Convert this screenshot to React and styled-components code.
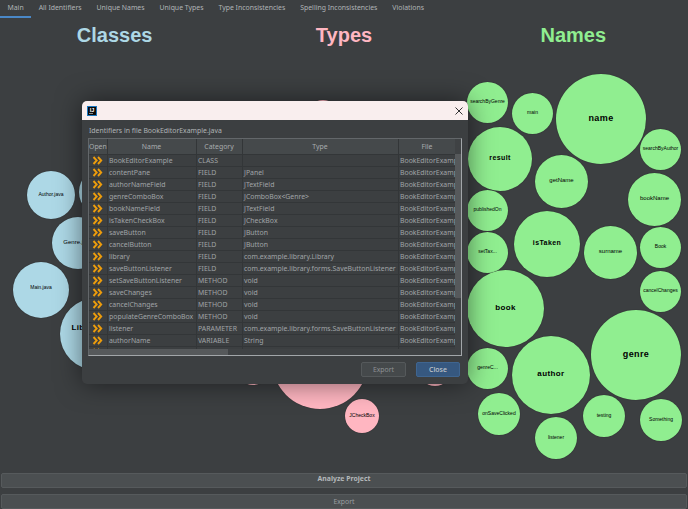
import React from "react";
import styled, { createGlobalStyle } from "styled-components";

const GlobalStyle = createGlobalStyle`
  html, body {
    margin: 0;
    padding: 0;
    background: #3c3f41;
    overflow: hidden;
  }
  * {
    box-sizing: border-box;
  }
`;

const TOP = 18;
const SMALL_TEXT = "6.9px";

const tabs = [
  "Main",
  "All Identifiers",
  "Unique Names",
  "Unique Types",
  "Type Inconsistencies",
  "Spelling Inconsistencies",
  "Violations",
];

// x, y, d in page pixels
const classBubbles = [
  { x: 79, y: 168, d: 48, label: "" },
  { x: 27, y: 171, d: 48, label: "Author.java" },
  { x: 52, y: 217, d: 52, label: "Genre.java", size: 6 },
  { x: 13, y: 262, d: 56, label: "Main.java", lift: 6 },
  { x: 60, y: 298, d: 72, label: "Library.java", size: 8, bold: true, lift: 14 },
];

const typeBubbles = [
  { x: 308, y: 100, d: 30, label: "" },
  { x: 272, y: 313, d: 96, label: "" },
  { x: 236, y: 351, d: 34, label: "" },
  { x: 418, y: 352, d: 34, label: "" },
  { x: 345, y: 399, d: 34, label: "JCheckBox" },
];

const nameBubbles = [
  { x: 467, y: 82, d: 41, label: "searchByGenre" },
  { x: 512, y: 93, d: 41, label: "main" },
  { x: 556, y: 74, d: 90, label: "name", size: 9, bold: true },
  { x: 468, y: 127, d: 64, label: "result", size: 7, bold: true },
  { x: 535, y: 155, d: 53, label: "getName", size: 6 },
  { x: 640, y: 129, d: 41, label: "searchByAuthor" },
  { x: 628, y: 173, d: 53, label: "bookName", size: 6 },
  { x: 467, y: 190, d: 41, label: "publishedOn" },
  { x: 467, y: 232, d: 41, label: "setTax..." },
  { x: 514, y: 211, d: 66, label: "isTaken", size: 7, bold: true },
  { x: 584, y: 226, d: 53, label: "surname", size: 6 },
  { x: 640, y: 227, d: 41, label: "Book" },
  { x: 640, y: 271, d: 41, label: "cancelChanges" },
  { x: 467, y: 270, d: 77, label: "book", size: 8, bold: true },
  { x: 591, y: 310, d: 90, label: "genre", size: 9, bold: true },
  { x: 467, y: 348, d: 41, label: "genreC..." },
  { x: 512, y: 336, d: 78, label: "author", size: 8, bold: true },
  { x: 478, y: 393, d: 42, label: "onSaveClicked" },
  { x: 583, y: 395, d: 42, label: "testing" },
  { x: 640, y: 399, d: 42, label: "Something" },
  { x: 535, y: 417, d: 42, label: "listener" },
];

const F = "BookEditorExample.java";
const rows = [
  ["BookEditorExample", "CLASS", "", F],
  ["contentPane", "FIELD", "JPanel", F],
  ["authorNameField", "FIELD", "JTextField", F],
  ["genreComboBox", "FIELD", "JComboBox<Genre>", F],
  ["bookNameField", "FIELD", "JTextField", F],
  ["isTakenCheckBox", "FIELD", "JCheckBox", F],
  ["saveButton", "FIELD", "JButton", F],
  ["cancelButton", "FIELD", "JButton", F],
  ["library", "FIELD", "com.example.library.Library", F],
  ["saveButtonListener", "FIELD", "com.example.library.forms.SaveButtonListener", F],
  ["setSaveButtonListener", "METHOD", "void", F],
  ["saveChanges", "METHOD", "void", F],
  ["cancelChanges", "METHOD", "void", F],
  ["populateGenreComboBox", "METHOD", "void", F],
  ["listener", "PARAMETER", "com.example.library.forms.SaveButtonListener", F],
  ["authorName", "VARIABLE", "String", F],
  ["bookName", "VARIABLE", "String", F],
];

const Page = styled.div`
  width: 688px;
  height: 509px;
  display: flex;
  flex-direction: column;
  background: #3c3f41;
  font-family: "Noto Sans", sans-serif;
  overflow: hidden;
`;

const TabBar = styled.div`
  height: ${TOP}px;
  flex: none;
  display: flex;
`;

const Tab = styled.div`
  padding: 0 7.5px;
  font-size: ${SMALL_TEXT};
  line-height: 16px;
  color: #b0b4b6;
  border-bottom: 2px solid ${({ $active }) => ($active ? "#4a88c7" : "transparent")};
`;

const Content = styled.div`
  position: relative;
  flex: 1;
  min-height: 0;
`;

const Headings = styled.div`
  display: grid;
  grid-template-columns: repeat(3, 1fr);
  padding-top: 6px;
`;

const Heading = styled.div`
  text-align: center;
  font-family: "Liberation Sans", sans-serif;
  font-weight: 700;
  font-size: 20px;
  line-height: 22px;
  color: ${({ $color }) => $color};
`;

const Bubble = styled.div`
  position: absolute;
  left: ${({ $x }) => $x}px;
  top: ${({ $y }) => $y - TOP}px;
  width: ${({ $d }) => $d}px;
  height: ${({ $d }) => $d}px;
  padding-bottom: ${({ $lift }) => $lift}px;
  border-radius: 50%;
  background: ${({ $color }) => $color};
  box-shadow: 0 0 1px rgba(20, 20, 20, 0.8);
  display: flex;
  align-items: center;
  justify-content: center;
  font-family: "Liberation Sans", sans-serif;
  font-size: ${({ $size }) => $size}px;
  font-weight: ${({ $bold }) => ($bold ? 700 : 400)};
  letter-spacing: ${({ $bold }) => ($bold ? "0.4px" : "0")};
  color: #000;
  white-space: nowrap;
`;

const Dialog = styled.div`
  position: absolute;
  left: 82px;
  top: ${101 - TOP}px;
  width: 386px;
  height: 283px;
  background: #3c3f41;
  border-radius: 5px;
  box-shadow: 0 0 26px rgba(0, 0, 0, 0.5);
  display: flex;
  flex-direction: column;
  overflow: hidden;
`;

const TitleBar = styled.div`
  height: 19px;
  flex: none;
  background: #f9eeee;
  display: flex;
  align-items: center;
  justify-content: space-between;
  padding: 0 4px 0 5px;
`;

const AppLogo = styled.div`
  position: relative;
  width: 10px;
  height: 10px;
  background: #0a0a0a;
  outline: 1px solid #1c78c0;
  outline-offset: -1px;
  color: #fff;
  font-family: "Liberation Sans", sans-serif;
  font-weight: 700;
  font-size: 5.5px;
  line-height: 8px;
  text-align: center;
  &::after {
    content: "";
    position: absolute;
    left: 2px;
    bottom: 1.5px;
    width: 4px;
    height: 1px;
    background: #888;
  }
`;

const DialogBody = styled.div`
  flex: 1;
  min-height: 0;
  display: flex;
  flex-direction: column;
  padding: 0 6px;
`;

const DialogLabel = styled.div`
  height: 18px;
  flex: none;
  font-size: ${SMALL_TEXT};
  line-height: 21px;
  padding-left: 1px;
  color: #b0b4b6;
`;

const TableFrame = styled.div`
  position: relative;
  height: 218px;
  flex: none;
  border: 1px solid;
  border-color: #63676a #a2a6a9 #a2a6a9 #63676a;
  overflow: hidden;
`;

const Table = styled.table`
  border-collapse: collapse;
  table-layout: fixed;
  width: 367px;
  font-size: ${SMALL_TEXT};
  color: #a0a4a7;
  th, td {
    padding: 0 1.5px;
    overflow: hidden;
    white-space: nowrap;
    border-right: 1px solid #333638;
    border-bottom: 1px solid #333638;
  }
  th {
    height: 15px;
    font-weight: 400;
    text-align: center;
    color: #a8acae;
    background: #45494b;
  }
  td {
    height: 12px;
    line-height: 11px;
    background: #3c3f41;
  }
`;

const OpenCell = styled.td`
  text-align: center;
  && {
    padding: 0;
  }
`;

const ChevronIcon = () => (
  <svg width="11" height="9" viewBox="0 0 11 9" style={{ display: "block", margin: "0 auto" }}>
    <path d="M1.5 1l3.2 3.5L1.5 8M6 1l3.2 3.5L6 8" fill="none" stroke="#ec9c0c" strokeWidth="1.9" />
  </svg>
);

const ScrollCorner = styled.div`
  position: absolute;
  right: 0;
  top: 0;
  bottom: 0;
  width: 6px;
  background: #3f4244;
`;

const VThumb = styled.div`
  position: absolute;
  right: 0;
  top: 15px;
  width: 6px;
  height: 144px;
  background: #56595b;
`;

const HTrack = styled.div`
  position: absolute;
  left: 0;
  right: 0;
  bottom: 0;
  height: 6px;
  background: #3f4244;
`;

const HThumb = styled.div`
  position: absolute;
  left: 0;
  bottom: 0;
  width: 139px;
  height: 6px;
  background: #56595b;
`;

const DialogActions = styled.div`
  display: flex;
  justify-content: flex-end;
  gap: 10px;
  padding: 6px 2px 0 0;
`;

const DialogButton = styled.div`
  width: ${({ $primary }) => ($primary ? 44 : 45)}px;
  height: 15px;
  border-radius: 2px;
  font-size: ${SMALL_TEXT};
  line-height: 13px;
  text-align: center;
  color: ${({ $primary }) => ($primary ? "#c4c8cc" : "#8d9194")};
  font-weight: ${({ $primary }) => ($primary ? 500 : 400)};
  background: ${({ $primary }) => ($primary ? "#365880" : "#45494b")};
  border: 1px solid ${({ $primary }) => ($primary ? "#3f6590" : "#55595b")};
`;

const Footer = styled.div`
  flex: none;
  display: flex;
  flex-direction: column;
  gap: 6px;
  padding: 0 1px;
  height: 36px;
`;

const FooterButton = styled.div`
  height: 15px;
  flex: none;
  border-radius: 2px;
  background: #4b4f51;
  border: 1px solid #565a5c;
  font-size: ${SMALL_TEXT};
  font-weight: ${({ $strong }) => ($strong ? 700 : 400)};
  line-height: ${({ $strong }) => ($strong ? 10 : 13)}px;
  text-align: center;
  color: ${({ $strong }) => ($strong ? "#b4b8ba" : "#999da0")};
`;

const Bubbles = ({ items, color }) =>
  items.map((b, i) => (
    <Bubble
      key={i}
      $x={b.x}
      $y={b.y}
      $d={b.d}
      $size={b.size || 5}
      $bold={b.bold}
      $lift={b.lift ?? 3}
      $color={color}
    >
      {b.label}
    </Bubble>
  ));

export default function App() {
  return (
    <Page>
      <GlobalStyle />
      <TabBar>
        {tabs.map((t, i) => (
          <Tab key={t} $active={i === 0}>{t}</Tab>
        ))}
      </TabBar>
      <Content>
        <Headings>
          <Heading $color="#add8e6">Classes</Heading>
          <Heading $color="#ffb6c1">Types</Heading>
          <Heading $color="#90ee90">Names</Heading>
        </Headings>
        <Bubbles items={classBubbles} color="#add8e6" />
        <Bubbles items={typeBubbles} color="#ffb6c1" />
        <Bubbles items={nameBubbles} color="#90ee90" />
        <Dialog>
          <TitleBar>
            <AppLogo>IJ</AppLogo>
            <svg width="10" height="10" viewBox="0 0 10 10">
              <path d="M1.5 1.5l7 7M8.5 1.5l-7 7" stroke="#333" strokeWidth="1" />
            </svg>
          </TitleBar>
          <DialogBody>
            <DialogLabel>Identifiers in file BookEditorExample.java</DialogLabel>
            <TableFrame>
              <Table>
                <colgroup>
                  <col style={{ width: 18 }} />
                  <col style={{ width: 89 }} />
                  <col style={{ width: 46 }} />
                  <col style={{ width: 156 }} />
                  <col style={{ width: 58 }} />
                </colgroup>
                <thead>
                  <tr>
                    <th style={{ padding: 0 }}>Open</th>
                    <th>Name</th>
                    <th>Category</th>
                    <th>Type</th>
                    <th>File</th>
                  </tr>
                </thead>
                <tbody>
                  {rows.map((r) => (
                    <tr key={r[0]}>
                      <OpenCell><ChevronIcon /></OpenCell>
                      {r.map((c, i) => (
                        <td key={i}>{c}</td>
                      ))}
                    </tr>
                  ))}
                </tbody>
              </Table>
              <ScrollCorner />
              <VThumb />
              <HTrack />
              <HThumb />
            </TableFrame>
            <DialogActions>
              <DialogButton>Export</DialogButton>
              <DialogButton $primary>Close</DialogButton>
            </DialogActions>
          </DialogBody>
        </Dialog>
      </Content>
      <Footer>
        <FooterButton $strong>Analyze Project</FooterButton>
        <FooterButton>Export</FooterButton>
      </Footer>
    </Page>
  );
}
